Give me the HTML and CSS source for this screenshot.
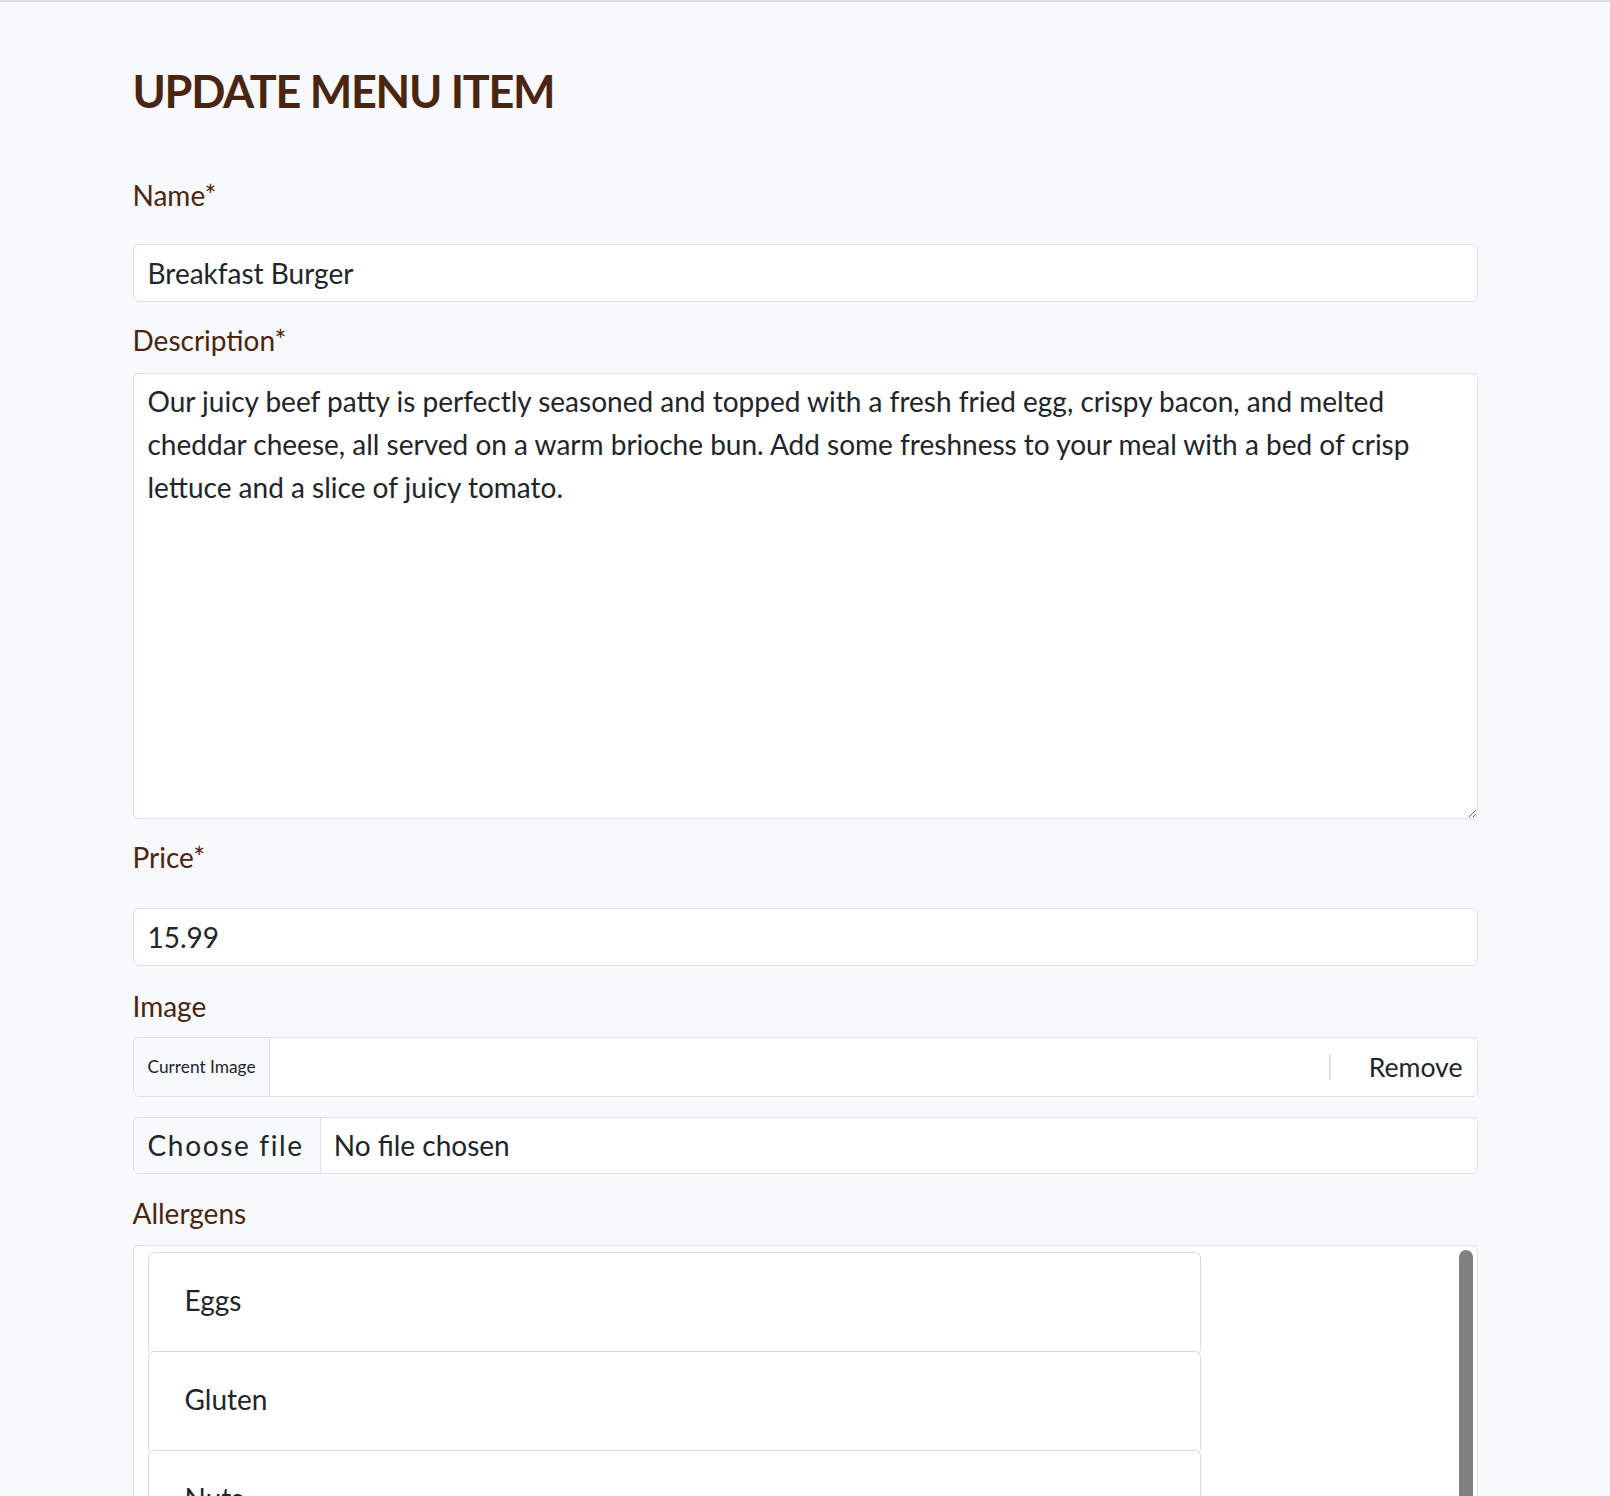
FILE: index.html
```html
<!DOCTYPE html>
<html lang="en">
<head>
<meta charset="utf-8">
<title>Update Menu Item</title>
<link rel="stylesheet" href="styles.css">
</head>
<body>
<main class="page">
  <h1 class="title">UPDATE MENU ITEM</h1>
  <form class="form">
    <label class="label label-name" for="name">Name*</label>
    <input class="control control-name" id="name" type="text" value="Breakfast Burger">

    <label class="label label-desc" for="desc">Description*</label>
    <textarea class="control textarea" id="desc">Our juicy beef patty is perfectly seasoned and topped with a fresh fried egg, crispy bacon, and melted cheddar cheese, all served on a warm brioche bun. Add some freshness to your meal with a bed of crisp lettuce and a slice of juicy tomato.</textarea>

    <label class="label label-price" for="price">Price*</label>
    <input class="control control-price" id="price" type="text" inputmode="decimal" value="15.99">

    <label class="label label-image">Image</label>
    <div class="image-group">
      <span class="image-tag">Current Image</span>
      <span class="image-fill"></span>
      <span class="image-sep"></span>
      <span class="image-remove">Remove</span>
    </div>
    <label class="file" for="image">
      <input class="file-input" id="image" type="file">
      <span class="file-btn">Choose file</span>
      <span class="file-name">No file chosen</span>
    </label>

    <label class="label label-allergens">Allergens</label>
    <div class="allergens-wrap">
      <div class="allergens">
        <div class="allergen">Eggs</div>
        <div class="allergen">Gluten</div>
        <div class="allergen">Nuts</div>
        <div class="allergen">Dairy</div>
        <div class="allergen">Soy</div>
        <div class="allergen">Shellfish</div>
        <div class="allergen">Fish</div>
        <div class="allergen">Sesame</div>
      </div>
      <span class="scroll-thumb"></span>
    </div>
  </form>
</main>
</body>
</html>
```
FILE: styles.css
```css
html {
  scrollbar-width: none;
}

body {
  margin: 0;
  border-top: 2px solid #dcdee2;
  background: #f8f9fa;
  font-family: "Lato", "Roboto", sans-serif;
  color: #212529;
}

.page {
  width: 1345px;
  margin: 0 auto;
  padding-top: 61.6px;
}

.title {
  margin: 0 0 56px;
  font-size: 45px;
  line-height: 54px;
  font-weight: 700;
  letter-spacing: -1.3px;
  color: #4a2511;
}

.form {
  display: block;
}

.label {
  display: block;
  font-size: 28px;
  line-height: 42px;
  color: #4a2511;
  margin-bottom: 12px;
}

.label-name { margin-bottom: 28.4px; }
.label-price { margin-bottom: 30px; }
.label-image { margin-bottom: 10px; }
.label-allergens { margin-bottom: 11.5px; }

.control {
  display: block;
  box-sizing: border-box;
  width: 100%;
  border: 1px solid #dee2e6;
  border-radius: 6px;
  background: #fff;
  font-family: inherit;
  font-size: 28px;
  color: #212529;
  outline: none;
}

.control-name,
.control-price {
  height: 58px;
  padding: 7px 14px;
  line-height: 42px;
}

.control-name { margin-bottom: 17px; }
.control-price { margin-bottom: 19px; }

.textarea {
  height: 446px;
  padding: 6px 14px;
  line-height: 43px;
  resize: vertical;
  margin-bottom: 17px;
}

.image-group {
  display: flex;
  box-sizing: border-box;
  height: 60px;
  border: 1px solid #dee2e6;
  border-radius: 6px;
  background: #fff;
  overflow: hidden;
  margin-bottom: 20px;
}

.image-tag {
  display: flex;
  align-items: center;
  padding: 0 13px 0 14px;
  background: #f8f9fa;
  border-right: 1px solid #dee2e6;
  font-size: 17.3px;
  color: #212529;
}

.image-fill {
  flex: 1;
}

.image-sep {
  align-self: center;
  width: 2px;
  height: 26px;
  background: #dee2e6;
}

.image-remove {
  display: flex;
  align-items: center;
  padding: 0 14px 0 38px;
  font-size: 26.6px;
  color: #212529;
}

.file {
  display: flex;
  box-sizing: border-box;
  height: 57px;
  border: 1px solid #dee2e6;
  border-radius: 6px;
  background: #fff;
  font-size: 28px;
  color: #212529;
  overflow: hidden;
  margin-bottom: 18px;
  cursor: pointer;
}

.file-input {
  position: absolute;
  width: 1px;
  height: 1px;
  opacity: 0;
  overflow: hidden;
}

.file-btn {
  display: flex;
  align-items: center;
  padding: 0 16px 0 14px;
  background: #f8f9fa;
  border-right: 1px solid #dee2e6;
  letter-spacing: 1.65px;
}

.file-name {
  display: flex;
  align-items: center;
  padding-left: 13px;
}

.allergens-wrap {
  position: relative;
}

.allergens {
  box-sizing: border-box;
  height: 520px;
  overflow: hidden;
  padding: 6px 34px 6px 14px;
  border: 1px solid #dee2e6;
  border-radius: 6px;
  background: #fff;
}

.scroll-thumb {
  position: absolute;
  top: 4.5px;
  right: 4.5px;
  width: 14px;
  height: 330px;
  border-radius: 7px;
  background: #808080;
}

.allergen {
  box-sizing: border-box;
  width: 1053px;
  padding: 26px 36px 30px;
  border: 1px solid #dcdcdc;
  border-bottom: 0;
  border-radius: 6px 6px 0 0;
  font-size: 28px;
  line-height: 42px;
  color: #212529;
}
```
